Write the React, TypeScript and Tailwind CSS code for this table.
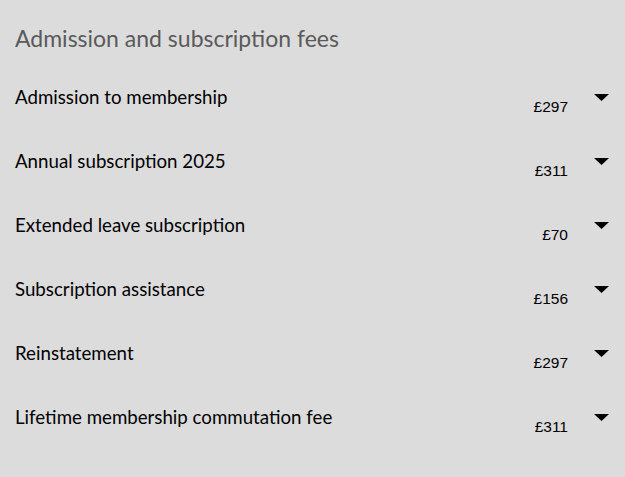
const fees = [
  { label: "Admission to membership", price: "£297" },
  { label: "Annual subscription 2025", price: "£311" },
  { label: "Extended leave subscription", price: "£70" },
  { label: "Subscription assistance", price: "£156" },
  { label: "Reinstatement", price: "£297" },
  { label: "Lifetime membership commutation fee", price: "£311" },
];

export default function App() {
  return (
    <div className="min-h-screen w-full bg-[#dcdcdc] px-[15px] pt-[24px] font-['Lato',sans-serif]">
      <h2 className="text-[23px] leading-[28px] text-[#5a5a5a]">
        Admission and subscription fees
      </h2>
      <div className="mt-[34px]">
        {fees.map((fee) => (
          <div key={fee.label} className="flex h-[64px] items-start">
            <div className="flex-1 text-[18.7px] leading-[22px] text-black">
              {fee.label}
            </div>
            <div className="mt-[11px] text-[15.5px] leading-[20px] text-black font-['Liberation_Sans',sans-serif]">
              {fee.price}
            </div>
            <svg
              className="ml-[26px] mt-[8px] mr-[1px]"
              width="15"
              height="7"
              viewBox="0 0 15 7"
            >
              <polygon points="0,0 15,0 7.5,7" fill="#000" />
            </svg>
          </div>
        ))}
      </div>
    </div>
  );
}
